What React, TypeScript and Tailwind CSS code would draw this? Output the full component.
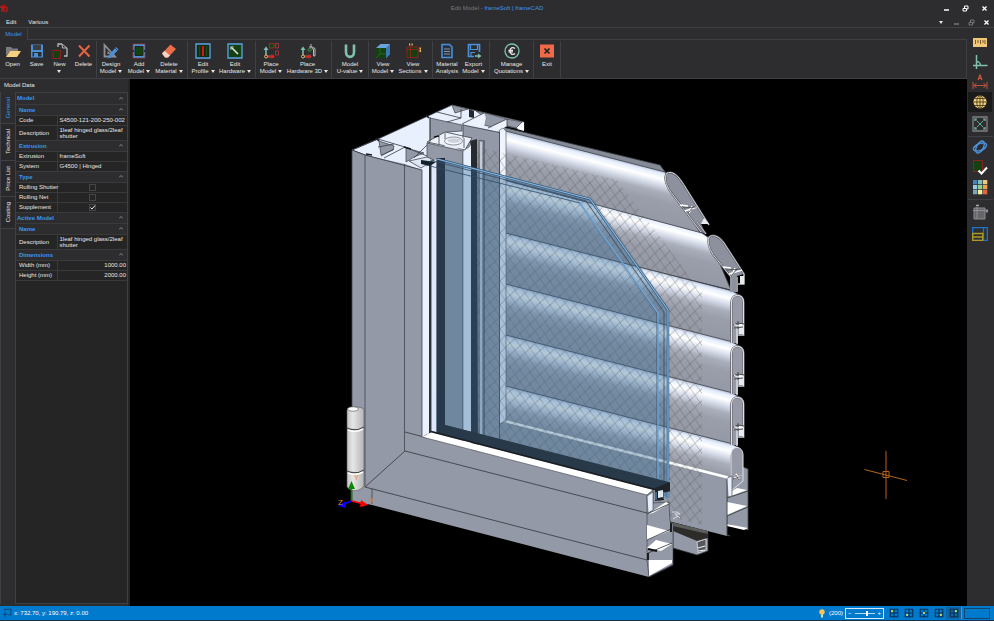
import { useState, type ReactNode } from "react";
import clsx from "clsx";

const BLUE = "#4b8fd6";
const TEAL = "#7fc0ae";
const GREEN = "#15400f";
const RED = "#e0201c";

const Icon = ({ children, size = "size-4" }: { children: ReactNode; size?: string }) => (
    <svg viewBox="0 0 16 16" className={clsx(size, "shrink-0")} fill="none" aria-hidden="true">
        {children}
    </svg>
);

const Axes = () => (
    <>
        <path d="M3 12V5M3 13.500h8" stroke={TEAL} strokeWidth="1.500" />
        <path d="M0.500 7L3 3.500L5.500 7z" fill={TEAL} />
        <path d="M5 13.500h5" stroke={RED} strokeWidth="1.500" />
        <path d="M8.500 11l3.500 2.500L8.500 16z" fill={RED} />
        <circle cx="3" cy="13.500" r="1.500" fill="#2d2d30" stroke="#f0b070" />
    </>
);

const ribbonIcons: Record<string, ReactNode> = {
    open: (
        <>
            <path d="M1 13V4h5l1.500 1.500H13V8H5z" fill="#7d7d7d" />
            <path d="M1 14l4-6h11l-4 6z" fill="#f5cf80" />
        </>
    ),
    save: (
        <>
            <path d="M2 1.500h12v13H2z" fill={BLUE} />
            <path d="M4 2h8v5H4z" fill="#3a3d42" />
            <path d="M3.500 9h9v4.500h-9z" fill="#2d2d30" />
            <path d="M5 10h4v4H5z" fill={BLUE} />
        </>
    ),
    new: (
        <>
            <path d="M6 4V1h4M15 5v8h-3" stroke="#b8b8b8" strokeWidth="1.300" />
            <path d="M10 1l5 4h-4.500z" stroke="#b8b8b8" />
            <path d="M1 7.500h7.500v8H1z" fill={GREEN} stroke="#8e2020" />
        </>
    ),
    delete: <path d="M3 2.500l10.500 11M13.500 2.500L3 13.500" stroke="#e8633f" strokeWidth="2" />,
    design: (
        <>
            <path d="M1.500 2v11.500H12z" stroke="#8c8f94" strokeWidth="1.800" />
            <path d="M4.500 8v3H8z" fill="#8c8f94" />
            <path d="M5 15.500l1-3.500 7-8 2.500 2.500-7.500 8z" fill={BLUE} />
            <path d="M12 5l2.500 2.500" stroke="#2d2d30" strokeWidth=".7" />
        </>
    ),
    add: (
        <>
            <path d="M2 1h12v14H2z" fill="#4b8fd6" stroke="#a33" strokeWidth=".7" />
            <path d="M4 3.500h8v9H4z" fill={GREEN} stroke="#222" />
            <path d="M1 8h2M13 8h2" stroke="#2d2d30" strokeWidth="2" />
        </>
    ),
    erase: (
        <>
            <path d="M1 10.500L9.500 1.500 15 6 7 14.500H4z" fill="#ec6b48" />
            <path d="M1 10.500l2.500-2.700 5.500 4.600-2 2.100H4z" fill="#f6d3c6" />
        </>
    ),
    profile: (
        <>
            <path d="M1 1h14v14H1z" fill="#14280f" stroke="#5aa4e8" strokeWidth="1.300" />
            <path d="M7 3h2v10H7z" fill="#d01818" />
            <path d="M4.500 3v10M11.500 3v10" stroke="#1c4a1a" strokeWidth="1.500" />
        </>
    ),
    hardware: (
        <>
            <path d="M1 1h14v14H1z" fill={GREEN} stroke="#5aa4e8" strokeWidth="1.300" />
            <path d="M5 5l6 6" stroke="#e4e4e4" strokeWidth="1.600" />
            <path d="M4 6.500V4h2.500" stroke="#e4e4e4" strokeWidth="1.200" />
        </>
    ),
    placeModel: (
        <>
            <Axes />
            <path d="M6.500.5H11V5H6.500z" fill={GREEN} stroke="#b02424" strokeWidth=".9" />
            <path d="M12.500.5h3V5h-3zM12.500 8h3v4h-3z" fill={GREEN} stroke="#b0304a" strokeWidth=".9" />
        </>
    ),
    placeHardware: (
        <>
            <Axes />
            <path d="M9 4h3l3 1.500V13h-1.500V6L12 5.500M11 1v4" stroke="#b8b8b8" />
            <path d="M8 6l3-1v3H8z" stroke="#3f8f4a" strokeWidth=".8" />
        </>
    ),
    uvalue: <path d="M4 1.500V9c0 6.500 8 6.500 8 0V1.500" stroke={TEAL} strokeWidth="2.600" />,
    view: (
        <>
            <path d="M1 5l4.500-4H15v10l-4 4H1z" fill="#6ba4dc" />
            <path d="M11 5l4-4v10l-4 4z" fill="#3b76bb" />
            <path d="M1 5h10v10H1z" fill={GREEN} />
            <path d="M1 15l4-4h6M5 11V5" stroke="#2f6a28" strokeWidth=".8" />
        </>
    ),
    sections: (
        <>
            <path d="M2 4h11v10.500H2z" fill={GREEN} stroke="#a02020" strokeWidth=".8" />
            <path d="M5.500 3v12M1 6.500h13" stroke="#a02020" strokeWidth=".8" />
            <path d="M4 1.500h1.200M6.500 1.500h1.200M14.500 5.500h1.500M14.500 8h1.500" stroke="#f2c14d" strokeWidth="1.800" />
        </>
    ),
    analysis: (
        <>
            <path d="M3 1.500h7.500L13 4v10.500H3z" fill="#26313f" stroke="#4b8fd6" strokeWidth="1.600" />
            <path d="M5 6h6M5 8.500h6M5 11h6" stroke="#9aa0a8" strokeWidth=".9" />
        </>
    ),
    export: (
        <>
            <path d="M8 13.500H2.500V1.500h11V9" stroke={BLUE} strokeWidth="1.700" />
            <path d="M4.500 2v4.500h7V2M5 13V9.500h4" stroke={BLUE} strokeWidth="1.200" />
            <path d="M9 13h4" stroke={TEAL} strokeWidth="1.500" />
            <path d="M12 10.500l3.500 2.500L12 15.500z" fill={TEAL} />
        </>
    ),
    euro: (
        <>
            <circle cx="8" cy="8" r="7" stroke={TEAL} strokeWidth="1.300" />
            <path d="M11 5.500c-2.500-2-5-.5-5 2.500s2.500 4.500 5 2.500M4.500 7.300h4.500M4.500 8.900h4.500" stroke="#e8e8e8" strokeWidth="1.300" />
        </>
    ),
    exit: (
        <>
            <path d="M1 1.500h14v13H1z" fill="#ee6a48" />
            <path d="M5.500 5.500l5 5M10.500 5.500l-5 5" stroke="#222" strokeWidth="1.700" />
        </>
    ),
};

type RibbonItem = { icon: string; lines: string[]; width: string; menu?: boolean };

const ribbonGroups: { width: string; items: RibbonItem[] }[] = [
    {
        width: "w-[97px]",
        items: [
            { icon: "open", lines: ["Open"], width: "w-[25px]" },
            { icon: "save", lines: ["Save"], width: "w-[23px]" },
            { icon: "new", lines: ["New", ""], width: "w-[23px]", menu: true },
            { icon: "delete", lines: ["Delete"], width: "w-[25px]" },
        ],
    },
    {
        width: "w-[91px]",
        items: [
            { icon: "design", lines: ["Design", "Model"], width: "w-[28px]", menu: true },
            { icon: "add", lines: ["Add", "Model"], width: "w-[28px]", menu: true },
            { icon: "erase", lines: ["Delete", "Material"], width: "w-[32px]", menu: true },
        ],
    },
    {
        width: "w-[68px]",
        items: [
            { icon: "profile", lines: ["Edit", "Profile"], width: "w-[30px]", menu: true },
            { icon: "hardware", lines: ["Edit", "Hardware"], width: "w-[34px]", menu: true },
        ],
    },
    {
        width: "w-[76px]",
        items: [
            { icon: "placeModel", lines: ["Place", "Model"], width: "w-[30px]", menu: true },
            { icon: "placeHardware", lines: ["Place", "Hardware 3D"], width: "w-[43px]", menu: true },
        ],
    },
    { width: "w-[37px]", items: [{ icon: "uvalue", lines: ["Model", "U-value"], width: "w-[36px]", menu: true }] },
    {
        width: "w-[64px]",
        items: [
            { icon: "view", lines: ["View", "Model"], width: "w-[28px]", menu: true },
            { icon: "sections", lines: ["View", "Sections"], width: "w-[32px]", menu: true },
        ],
    },
    {
        width: "w-[57px]",
        items: [
            { icon: "analysis", lines: ["Material", "Analysis"], width: "w-[28px]" },
            { icon: "export", lines: ["Export", "Model"], width: "w-[25px]", menu: true },
        ],
    },
    { width: "w-[44px]", items: [{ icon: "euro", lines: ["Manage", "Quotations"], width: "w-[43px]", menu: true }] },
    { width: "w-[27px]", items: [{ icon: "exit", lines: ["Exit"], width: "w-[26px]" }] },
];

const Caret = ({ className = "" }: { className?: string }) => (
    <svg viewBox="0 0 4 3" className={clsx("inline-block h-[3px] w-1", className)} aria-hidden="true">
        <path d="M0 0h4L2 3z" fill="currentColor" />
    </svg>
);

function RibbonButton({ icon, lines, width, menu }: RibbonItem) {
    return (
        <button className={clsx("flex flex-col items-center gap-0.5 pt-0.5 hover:bg-[#3e3e42]", width)}>
            <Icon>{ribbonIcons[icon]}</Icon>
            <span className="flex flex-col items-center whitespace-nowrap leading-[7px]">
                {lines.map((line, i) => (
                    <span key={line} className="flex h-[7px] items-center gap-0.5">
                        {line}
                        {menu && i === lines.length - 1 && <Caret />}
                    </span>
                ))}
            </span>
        </button>
    );
}

function WindowButtons({ dim = false }: { dim?: boolean }) {
    const tone = dim ? "text-[#77777a]" : "text-white";
    return (
        <div className={clsx("flex items-center", dim ? "gap-2 pr-1" : "gap-3 pr-1.5")}>
            {dim && (
                <button aria-label="Window menu" className="mr-0.5 flex">
                    <Caret />
                </button>
            )}
            <button aria-label="Minimize" className={tone}>
                <svg viewBox="0 0 7 7" className="size-[7px]"><path d="M1 5h5" stroke="currentColor" strokeWidth="1.500" /></svg>
            </button>
            <button aria-label="Restore" className={tone}>
                <svg viewBox="0 0 7 7" className="size-[7px]" fill="none" stroke="currentColor">
                    <path d="M1 3.500h3.500V6H1zM2.500 3V1h3.500v3H5" />
                </svg>
            </button>
            <button aria-label="Close" className="text-white">
                <svg viewBox="0 0 7 7" className="size-[7px]"><path d="M1.500 1.500l4 4M5.500 1.500l-4 4" stroke="currentColor" strokeWidth="1.300" /></svg>
            </button>
        </div>
    );
}

type Row =
    | { kind: "group" | "head"; label: string }
    | { kind: "text"; label: string; value: string; tall?: boolean; right?: boolean }
    | { kind: "check"; label: string; checked: boolean };

const rows: Row[] = [
    { kind: "group", label: "Model" },
    { kind: "head", label: "Name" },
    { kind: "text", label: "Code", value: "S4500-121-200-250-002" },
    { kind: "text", label: "Description", value: "1leaf hinged glass/2leaf shutter", tall: true },
    { kind: "head", label: "Extrusion" },
    { kind: "text", label: "Extrusion", value: "frameSoft" },
    { kind: "text", label: "System", value: "G4500 | Hinged" },
    { kind: "head", label: "Type" },
    { kind: "check", label: "Rolling Shutter", checked: false },
    { kind: "check", label: "Rolling Net", checked: false },
    { kind: "check", label: "Supplement", checked: true },
    { kind: "group", label: "Active Model" },
    { kind: "head", label: "Name" },
    { kind: "text", label: "Description", value: "1leaf hinged glass/2leaf shutter", tall: true },
    { kind: "head", label: "Dimensions" },
    { kind: "text", label: "Width (mm)", value: "1000.00", right: true },
    { kind: "text", label: "Height (mm)", value: "2000.00", right: true },
];

function PropertyRow({ row }: { row: Row }) {
    const [checked, setChecked] = useState(row.kind === "check" && row.checked);

    if (row.kind === "group" || row.kind === "head") {
        return (
            <tr className="h-[11px] border-b border-[#3a3a3d] bg-[#2d2d30]">
                <th colSpan={2} className={clsx("p-0 pr-1 text-left font-bold text-[#3c96ee]", row.kind === "head" ? "pl-[3px]" : "pl-px")}>
                    <span className="flex items-center justify-between">
                        {row.label}
                        <svg viewBox="0 0 4 3" className="h-[3px] w-1" fill="none"><path d="M0 2.500L2 .5l2 2" stroke="#8a8a8d" /></svg>
                    </span>
                </th>
            </tr>
        );
    }

    const id = row.label.replace(/\s/g, "-").toLowerCase();
    return (
        <tr className={clsx("border-b border-[#3a3a3d]", row.kind === "text" && row.tall ? "h-[15px]" : "h-[10px]")}>
            <th className="w-[41px] border-r border-[#3a3a3d] p-0 pl-[3px] text-left font-normal whitespace-nowrap">
                {row.kind === "check" ? <label htmlFor={id}>{row.label}</label> : row.label}
            </th>
            <td className={clsx("p-0 pr-px pl-0.5", row.kind === "text" && row.right && "text-right")}>
                {row.kind === "check" ? (
                    <span className="relative mx-auto flex size-[7px]">
                        <input
                            id={id}
                            type="checkbox"
                            checked={checked}
                            onChange={(e) => setChecked(e.target.checked)}
                            className="size-[7px] appearance-none border border-[#454548]"
                        />
                        {checked && (
                            <svg viewBox="0 0 7 7" className="pointer-events-none absolute inset-0" fill="none">
                                <path d="M1.500 3.500L3 5l3-3.500" stroke="#eee" />
                            </svg>
                        )}
                    </span>
                ) : (
                    row.value
                )}
            </td>
        </tr>
    );
}

const sideTabs = [
    { label: "General", height: "h-8" },
    { label: "Technical", height: "h-[37px]" },
    { label: "Price List", height: "h-[36px]" },
    { label: "Costing", height: "h-8" },
];

function ModelData() {
    const [tab, setTab] = useState("General");
    return (
        <aside className="flex w-[130px] shrink-0 flex-col border-r-2 border-[#252528] pb-0.5">
            <h2 className="flex h-[13px] items-center pl-1">Model Data</h2>
            <div className="flex min-h-0 flex-1">
                <div role="tablist" aria-orientation="vertical" className="flex w-[15px] shrink-0 flex-col border-l border-[#3f3f46]">
                    {sideTabs.map(({ label, height }) => (
                        <button
                            key={label}
                            role="tab"
                            aria-selected={tab === label}
                            onClick={() => setTab(label)}
                            className={clsx(
                                "flex w-full items-center justify-center border-b border-[#3f3f46]",
                                height,
                                tab === label ? "text-[#3c96ee]" : "bg-[#29292b]",
                            )}
                        >
                            <span className="rotate-180 whitespace-nowrap [writing-mode:vertical-rl]">{label}</span>
                        </button>
                    ))}
                </div>
                <div className="flex-1 border border-[#3f3f46] bg-[#252526]">
                    <table className="w-full table-fixed border-collapse leading-[6px]">
                        <colgroup>
                            <col className="w-[41px]" />
                            <col />
                        </colgroup>
                        <tbody>
                            {rows.map((row, i) => <PropertyRow key={i} row={row} />)}
                        </tbody>
                    </table>
                </div>
            </div>
        </aside>
    );
}

// slat cross section, drawn at the right hand end of each straight slat
const SlatEnd = () => (
    <g>
        <path d="M731 343V302c0-10 13-10 13 0v34h-6v7z" fill="#989ba7" />
        <path d="M731.500 343V302c0-9 12-9 12 0v33h-5" fill="none" stroke="#55585f" strokeWidth="2.200" />
        <path d="M731.500 343V302c0-9 12-9 12 0v33h-5" fill="none" stroke="#dfe1e6" strokeWidth="1.200" />
        <path d="M737 327v17" stroke="#d8dae0" strokeWidth="1.500" />
        <path d="M739 324h5v10h-5z" fill="#e9ebf0" />
        <path d="M733 325l5-2 6 1M734 328l9-1M738 321v8" stroke="#4b4b4f" strokeWidth="1" fill="none" />
        <path d="M734 324l3 2 5-1" stroke="#fff" strokeWidth="1" fill="none" />
    </g>
);

function FrameModel() {
    const glass = "M437 159L590 199L668 310V498L655 490L436 433z";
    return (
        <svg viewBox="130 79 837 527" className="block h-full w-full" role="img" aria-label="3D frame section">
            <defs>
                <linearGradient id="slat" gradientUnits="userSpaceOnUse" x1="506" y1="233" x2="493.500" y2="282">
                    <stop offset="0" stopColor="#b4bfd8" />
                    <stop offset=".06" stopColor="#e6eefc" />
                    <stop offset=".16" stopColor="#fff" />
                    <stop offset=".28" stopColor="#d6dcea" />
                    <stop offset=".42" stopColor="#aaaebb" />
                    <stop offset=".6" stopColor="#9a9daa" />
                    <stop offset="1" stopColor="#9599a5" />
                </linearGradient>
                <linearGradient id="hinge">
                    <stop offset="0" stopColor="#c4c4c4" />
                    <stop offset=".35" stopColor="#e6e6e6" />
                    <stop offset="1" stopColor="#b4b4b4" />
                </linearGradient>
                <pattern id="net" width="10" height="12" patternUnits="userSpaceOnUse" patternTransform="skewY(14)">
                    <path d="M0 0L10 12M10 0L0 12" stroke="#55564f" strokeWidth=".7" fill="none" />
                </pattern>
            </defs>

            {/* roller shutter */}
            <g stroke="#3c3f46" strokeWidth=".8">
                <path d="M498 126L660 165L666 173L500 134z" fill="#858a97" />
                <g transform="translate(0 -102)">
                    <path d="M500 231.500L665 274L699 333L700 335L500 282z" fill="url(#slat)" />
                </g>
                <g transform="translate(0 -53)">
                    <path d="M500 232L702 286L709 291L731 343L500 286z" fill="url(#slat)" />
                </g>
                {[0, 51, 102, 153].map((dy) => (
                    <g key={dy} transform={`translate(0 ${dy})`}>
                        <path d="M500 231.500L731 290.500L738 294L731 302V343L500 284z" fill="url(#slat)" />
                    </g>
                ))}
            </g>
            <path d="M666 173c-4 6 1 16 7 22L701 232l5 2-5-10h8L687 190c-6-10-10-16-16-18z" fill="#8d919d" />
            <path d="M706 234L697 222M709 225L687 190c-6-10-12-20-20-17-4 5 0 15 6 22L701 232" fill="none" stroke="#55585f" strokeWidth="2" />
            <path d="M706 234L697 222M709 225L687 190c-6-10-12-20-20-17-4 5 0 15 6 22L701 232" fill="none" stroke="#d3d5da" />
            <path d="M701 224h8l-5-6z" fill="#e8eaf0" />
            <path d="M680 205l8 1M685 211l12-4M692 206l-3 7" stroke="#fff" strokeWidth="1.600" />
            <path d="M682 208l15-1M688 213l6-7" stroke="#444" strokeWidth=".8" />
            <path d="M709 237c-2 6 1 14 6 20L731 277v15h6V276l7-2L724 243c-5-7-11-9-15-6z" fill="#8d919d" />
            <path d="M738 284h6V274L724 243c-5-7-11-9-15-6-2 6 1 14 6 20L731 277v15M737 277v15" fill="none" stroke="#55585f" strokeWidth="2" />
            <path d="M738 284h6V274L724 243c-5-7-11-9-15-6-2 6 1 14 6 20L731 277v15M737 277v15" fill="none" stroke="#d3d5da" />
            <path d="M740 276h4v8h-4z" fill="#e8eaf0" />
            <path d="M723 267l8 1M729 274l13-4M735 268l-3 7" stroke="#fff" strokeWidth="1.600" />
            <path d="M726 270l15-1M732 275l5-6" stroke="#444" strokeWidth=".8" />
            {[0, 51, 102].map((dy) => (
                <g key={dy} transform={`translate(0 ${dy})`}><SlatEnd /></g>
            ))}

            {/* bottom shutter rail */}
            <path d="M738 468L743 467L748 469V530L727 524V480z" fill="#9399a6" stroke="#43464d" strokeWidth=".8" />
            <path d="M731 478V455c0-10 12-10 12 0v26l-12 10z" fill="#989ba7" stroke="#dfe1e6" />
            <path d="M734 478l8-2M736 474l3 5" stroke="#fff" strokeWidth="1.600" />
            <path d="M733 479l9-3M736 475l3 5" stroke="#444" strokeWidth=".7" />
            <path d="M727 494L737 488L747 490L731 496zM727 502L747 506L727 515zM727 524L748 528L744 530L727 526z" fill="#fff" />
            <path d="M727 498L748 491M727 516L748 507" stroke="#33353a" strokeWidth=".8" />
            <path d="M500 420L727 479V536L500 478z" fill="#9399a6" />
            <path d="M727 477V535L730 536" stroke="#4a4d54" fill="none" />
            <path d="M727 478L732 476V496L728 497z" fill="#e8effd" stroke="#55585f" strokeWidth=".7" />
            <path d="M503 419L729 476L727 479L502 422z" fill="#fff" stroke="#777c88" strokeWidth=".5" />

            {/* guide stile */}
            <path d="M463 124L500 132V478L463 468z" fill="#9399a6" />

            {/* top cross sections */}
            <path d="M352 150L378 139L428 116L452 105L524 122V130L506 126L500 132L484 134L463 160L421 171L365 155z" fill="#e8effd" stroke="#45484f" strokeWidth=".8" />
            <path d="M463 125L484 129L502 133V170H463z" fill="#9399a6" />
            <g fill="#9399a6" stroke="#3c3f46" strokeWidth=".7">
                <path d="M452 105L468 109L455 113z" />
                <path d="M430 118L462 125V131L447 132L435 138L430 142z" />
                <path d="M476 111L485 113L507 119L522 122L516 128L500 124L492 127L484 125L486 118z" />
                <path d="M379 141L394 146L393 150L381 155z" />
                <path d="M406 148L424 153L414 157L406 162z" />
            </g>
            <path d="M427 142L445 132L472 138L465 150z" fill="#edf2fd" stroke="#3c3f46" strokeWidth=".8" />
            <path d="M439 136v8M445 133v6M464 138v10" stroke="#62666e" fill="none" />
            <path d="M444.500 141v5c2 4 16 4 18 0v-5" fill="#e9edf5" />
            <ellipse cx="453.500" cy="141" rx="9" ry="4" fill="#f4f7fc" stroke="#8d9096" />
            <ellipse cx="454" cy="140.500" rx="6.500" ry="2.300" fill="#cdd2dc" />
            <path d="M465 123L484 113L486 118L484 127z" fill="#edf2fd" />
            <path d="M490 127L507 119V126L500 130z" fill="#edf2fd" />
            <path d="M517 129L524 122V131z" fill="#fff" />
            <path d="M462 124L484 113M488 128L507 119M507 119V126M378 147L394 144M381 156L394 149M384 158L405 147M405 147L427 156M414 158L430 142M463 124V138M430 117V142M352 150L378 139M378 139L405 147M437 112L461 118M461 109V118L447 122M463 125L502 133" stroke="#393c42" strokeWidth=".8" fill="none" />
            <path d="M469 109l5 2v7l-5-1z" fill="#24272b" />
            <path d="M376 138l3 3M426 115l3 3M434 137l5-1M404 147l7 2M366 154l6 1" stroke="#16181b" strokeWidth="1.600" />
            <path d="M499.500 130L503 128L506 131V421L499.500 424z" fill="#f0f4ff" stroke="#4a4d54" strokeWidth="0.6" />

            {/* insect net */}
            <path d="M474 146L617 180L702 293V525L474 468z" fill="url(#net)" opacity=".6" />
            <path d="M484 140V440M499.500 132V445" stroke="#3f444c" strokeWidth=".8" />
            <path d="M671 522L708 531V536L673 528z" fill="#5d5e5c" />
            <path d="M673 528L697 535L708 533V551L697 555L673 548z" fill="#9399a6" stroke="#303236" strokeWidth=".7" />
            <path d="M673 526L708 534V538L697 541L673 531z" fill="#2d2c2b" />
            <path d="M697 542L706 539V550L698 553z" fill="#55575c" stroke="#c8cad0" />
            <path d="M698 548l7-2M698 551l7-1" stroke="#f0f0f2" strokeWidth="1.200" />
            <path d="M672 512h5l3 2h-5l5 4M673 519l5-3" stroke="#d8dade" strokeWidth="1" fill="none" />

            {/* sash stile */}
            <path d="M427 143L463 151V470L427 460z" fill="#9399a6" stroke="#3c3f46" strokeWidth=".7" />
            <path d="M463 151L469 147L472 143V468L463 465z" fill="#e8effd" stroke="#50545c" strokeWidth=".6" />
            <path d="M470 141L477 139L478 470H471V146z" fill="#26292e" />
            <path d="M479 140L484 141V470M479 140V470" stroke="#50555e" strokeWidth=".8" fill="none" />
            <path d="M480 142h2v300h-2z" fill="#c2cbdc" />

            {/* outer frame */}
            <path d="M352 150L365 155L405 164L422 170V437L647 495V513L649 577L372 505L352 501z" fill="#9399a6" />
            <path d="M422 169L431 164V432L422 437z" fill="#eaf1ff" />
            <path d="M432 163L437 158V432L432 431z" fill="#dfe9fb" />
            <path d="M430 164V433" stroke="#1b1d20" strokeWidth="1.800" />
            <path d="M409 161L427 157L434 160L421 168z" fill="#dfe7f5" stroke="#33363b" strokeWidth=".7" />
            <path d="M421 160L436 162L430 166L421 164z" fill="#14202c" />
            <path d="M436.500 158H445V425L668 483L670 490L655 488L436.500 432z" fill="#241e22" />
            <path d="M365 155V487M404.500 164V451M422 170V436M352 150V501M372 489V504" stroke="#41454d" strokeWidth=".8" />
            <path d="M352 150L365 155L422 170M365 487L405 451M365 487L647 560M405 451L647 513M405 432L422 436.500" stroke="#33363c" strokeWidth=".8" fill="none" />

            {/* glass */}
            <path d={glass} fill="#346996" fillOpacity=".37" />
            <path d="M437 159L590 199L668 310V498" fill="none" stroke="#32506e" strokeWidth="2.400" />
            <path d="M437 159L590 199L668 310V498" fill="none" stroke="#84b8e4" strokeWidth="1.200" />
            <path d="M430 160L586 201L664 312V496M430 166L580 203L657 313V492" fill="none" stroke="#2f4b67" strokeWidth=".8" />
            <path d="M580 203L658 313V492" fill="none" stroke="#6fa7d8" strokeWidth="1.300" />

            {/* sill and front rail */}
            <path d="M445 425L669 482V491L663 492L436 433z" fill="#28394a" />
            <path d="M422 437L431 432.500L653 490L647 495z" fill="#fff" />
            <path d="M431 431.500L655 489.500" stroke="#1c1d1f" strokeWidth="1.500" />
            <path d="M422 437L647 495" stroke="#50545c" strokeWidth=".7" />
            <path d="M655 488L670 482V491L664 493V500L655 501z" fill="#1e2329" />
            <path d="M658 491L663 490V497L658 498z" fill="#dfe6f0" />
            <path d="M656 492V500M664 492V499" stroke="#6fa7d8" />

            {/* front rail cross section */}
            <path d="M647 495L653 490V503L669 502L670 522L673 524V565L649 577L647 560z" fill="#9399a6" stroke="#43464d" strokeWidth=".7" />
            <path d="M647 496L653 492V510L648 513z" fill="#e8effd" stroke="#50545c" strokeWidth=".7" />
            <path d="M648 514L666 502L669 504L653 513zM647 525L669 531L647 540zM647 548L656 540L672 544L661 551zM649 560L672 560V563L649 576z" fill="#fff" />
            <path d="M647 540L671 529M648 553L672 543M649 577L673 565M647 514L669 504" stroke="#2f3237" strokeWidth=".8" />
            <path d="M648 549L657 551M648 553V560M671 523V532" stroke="#111" strokeWidth="1.800" />

            {/* hinge */}
            <path d="M347 410c0-4 17-4 17 0V486c-4 6-13 6-17 1z" fill="url(#hinge)" stroke="#55585d" strokeWidth=".6" />
            <ellipse cx="353" cy="409" rx="5.500" ry="2.200" fill="#fafafa" stroke="#555" strokeWidth=".6" />
            <path d="M347 428q9 4 17-1M347 471q9 4 17-1" stroke="#4c4c4c" strokeWidth="1.300" fill="none" />
            <path d="M348 430q8 3 15-1M348 473q8 3 15-1" stroke="#fff" strokeWidth="1.500" fill="none" />

            {/* origin triad */}
            <path d="M351.500 501V488" stroke="#0a8a0a" strokeWidth="1.500" />
            <path d="M348 489L351.500 481L355 489z" fill="#0a8a0a" />
            <path d="M351.500 501L362 503.500" stroke="#f00" strokeWidth="1.500" />
            <path d="M361 500L368 505L360 507z" fill="#f00" />
            <path d="M351.500 501L344 504" stroke="#00f" strokeWidth="1.500" />
            <path d="M346 501L338 506L346 508z" fill="#00f" />
            <g fill="#f08428" fontSize="7">
                <text x="354" y="480">Y</text>
                <text x="369" y="503">X</text>
                <text x="338" y="505" fontSize="8">Z</text>
            </g>

            {/* cursor */}
            <path d="M886 451V499M864.500 469.500L907 480.500M883 471.500h6v6h-6z" stroke="#b5651a" strokeWidth="1" fill="none" />
        </svg>
    );
}

const palette = ["#4b7fc4", "#7fc0ae", "#f2c878", "#9cc8e8", "#8fd08a", "#f0a050", "#7aa8b8", "#f6ec9a", "#e86040"];

const tools: { label: string; height: string; active?: boolean; divider?: boolean; icon: ReactNode }[] = [
    {
        label: "Measure",
        height: "h-5",
        icon: (
            <>
                <path d="M1 4h14v9H1z" fill="#f2c878" />
                <path d="M3.500 6v4M6 6v3M8.500 6v4M11 6v3M13 6v4" stroke="#6b4f20" strokeWidth=".9" />
            </>
        ),
    },
    { label: "Ortho", height: "h-5", icon: <path d="M4.500 1v14M1 11.500h14.500M4.500 7.500a4 4 0 014 4" stroke={TEAL} strokeWidth="1.500" /> },
    {
        label: "Dimension",
        height: "h-5",
        icon: (
            <>
                <path d="M6 6l2-5 2 5M6.800 4.500h2.400" stroke="#d4573c" strokeWidth="1.200" />
                <path d="M1 8v7M15 8v7M2 11.500h12M4.500 9L2 11.500 4.500 14M11.500 9l2.500 2.500-2.500 2.500" stroke="#c4533c" />
            </>
        ),
    },
    {
        label: "World view",
        height: "h-5",
        active: true,
        icon: (
            <>
                <circle cx="8" cy="8" r="6.500" fill="#f2d07c" />
                <path d="M8 1.500v13M1.500 8h13M3 4.500h10M3 11.500h10" stroke="#4a3c1c" strokeWidth=".9" />
                <ellipse cx="8" cy="8" rx="3.200" ry="6.500" stroke="#4a3c1c" strokeWidth=".9" />
            </>
        ),
    },
    {
        label: "Zoom extents",
        height: "h-6",
        divider: true,
        icon: (
            <>
                <path d="M1 1h14v14H1z" stroke="#808084" strokeWidth="1.300" />
                <path d="M4.500 4.500l7 7M11.500 4.500l-7 7" stroke="#5fa890" />
                <path d="M3 5V3h2M11 3h2v2M13 11v2h-2M5 13H3v-2" stroke={TEAL} strokeWidth="1.200" />
            </>
        ),
    },
    {
        label: "Orbit",
        height: "h-5",
        icon: (
            <g stroke={BLUE} strokeWidth="1.500">
                <ellipse cx="8" cy="8" rx="7" ry="3.400" transform="rotate(-22 8 8)" />
                <ellipse cx="8" cy="8" rx="6.500" ry="3.400" transform="rotate(-62 8 8)" />
                <path d="M3 8l3-3M9 12l4-3" />
            </g>
        ),
    },
    {
        label: "Validate",
        height: "h-5",
        icon: (
            <>
                <path d="M1.500 1.500h9v11h-9z" fill={GREEN} stroke="#8e2020" />
                <path d="M6.500 11.500l3 3L15 8.500" stroke="#fff" strokeWidth="2" />
            </>
        ),
    },
    {
        label: "Colours",
        height: "h-5",
        divider: true,
        icon: palette.map((fill, i) => <rect key={fill} x={1 + (i % 3) * 5} y={1 + Math.floor(i / 3) * 5} width="4.300" height="4.300" fill={fill} />),
    },
    {
        label: "Section box",
        height: "h-6",
        icon: (
            <>
                <path d="M2 4h11v11H2z" fill="#66666a" stroke="#8c8c90" />
                <path d="M5 3v12M1 6.500h13" stroke="#9a9a9e" strokeWidth=".8" />
                <path d="M4 1.500h3M15 5.500v3" stroke="#aaa" strokeWidth="1.600" />
            </>
        ),
    },
    {
        label: "Layout",
        height: "h-5",
        icon: (
            <>
                <path d="M.7 1.700h14.600v12.600H.7zM11.500 2v12" stroke="#1f74c8" strokeWidth="1.300" />
                <path d="M.7 7.500h10v6.800H.7zM.7 11h10" stroke="#b09a20" strokeWidth="1.300" />
            </>
        ),
    },
];

const viewports = [
    { x: 5, y: 5 },
    { x: 5, y: 11 },
    { x: 8, y: 8 },
    { x: 11, y: 11 },
    { x: 11, y: 5 },
];

function StatusBar() {
    const [light, setLight] = useState(66);
    return (
        <footer className="flex h-[15px] shrink-0 items-center justify-between border-b border-[#12304a] bg-[#007acc] pr-1 pl-0.5 text-white">
            <div className="flex items-center gap-0.5">
                <Icon size="size-[10px]">
                    <path d="M4 4V2h10v9h-4M1 10h8M5 6v9" stroke="#0d4f86" strokeWidth="2" />
                </Icon>
                <span>x: 732.70, y: 190.79, z: 0.00</span>
            </div>
            <div className="flex items-center">
                <svg viewBox="0 0 6 9" className="mr-1 h-[9px] w-1.5" aria-hidden="true">
                    <circle cx="3" cy="3" r="2.700" fill="#ffc554" />
                    <path d="M2 5.500h2v3H2z" fill="#e8dcc0" />
                </svg>
                <label htmlFor="light" className="mr-0.5">(200)</label>
                <div className="flex h-[11px] w-[39px] items-center justify-between border border-[#d4e8f8] px-0.5">
                    <button aria-label="Decrease" className="leading-none">−</button>
                    <input
                        id="light"
                        type="range"
                        value={light}
                        onChange={(e) => setLight(Number(e.target.value))}
                        className="h-px w-5 appearance-none bg-[#b8daf4] [&::-webkit-slider-thumb]:h-[5px] [&::-webkit-slider-thumb]:w-0.5 [&::-webkit-slider-thumb]:appearance-none [&::-webkit-slider-thumb]:bg-white"
                    />
                    <button aria-label="Increase" className="leading-none">+</button>
                </div>
                <div className="mr-0.5 ml-0.5 flex border-r border-[#3c9ade]">
                    {viewports.map(({ x, y }, i) => (
                        <button key={i} aria-label={`Viewport ${i + 1}`} className={clsx("flex h-3 w-[15px] items-center justify-center", i === 4 && "bg-[#1264a0]")}>
                            <Icon size="size-[10px]">
                                <path d="M2 2h12v12H2zM8 1v14M1 8h14" stroke="#0b3054" strokeWidth="1.800" />
                                <rect x={x - 1.5} y={y - 1.5} width="3" height="3" fill="#d8e860" />
                            </Icon>
                        </button>
                    ))}
                </div>
                <div className="h-[11px] w-[26px] border border-[#15456e]" />
            </div>
        </footer>
    );
}

export default function App() {
    return (
        <div className="flex h-screen flex-col overflow-hidden bg-[#2d2d30] font-['Liberation_Sans',Arial,sans-serif] text-[6px] leading-[7px] text-[#e6e6e6]">
            <header className="shrink-0 border-b border-[#3f3f46]">
                <div className="grid h-[17px] grid-cols-[1fr_auto_1fr] items-center">
                    <svg viewBox="0 0 9 10" className="h-[10px] w-[9px]" fill="none" stroke="#c01818" strokeWidth="1.300" aria-hidden="true">
                        <path d="M0 3.500l2-1.500v6M4 8V3M2 4.500l2-2 3 1v3L5.500 8M4 1h1" />
                    </svg>
                    <h1 className="text-[#3c96ee]"><span className="text-[#77777a]">Edit Model</span> - frameSoft | frameCAD</h1>
                    <div className="flex justify-end"><WindowButtons /></div>
                </div>
                <div className="flex h-[10px] items-center justify-between">
                    <nav className="flex gap-3 pl-1.5">
                        <button>Edit</button>
                        <button>Various</button>
                    </nav>
                    <WindowButtons dim />
                </div>
            </header>

            <div className="flex min-h-0 flex-1">
                <div className="flex min-w-0 flex-1 flex-col">
                    <div role="tablist" className="flex h-3 shrink-0">
                        <button role="tab" aria-selected="true" className="w-7 border-r border-[#3f3f46] text-[#3c96ee]">Model</button>
                        <div className="flex-1 border-b border-[#3f3f46]" />
                    </div>
                    <div className="flex h-[39px] shrink-0 border-r border-b border-[#3f3f46] pt-px">
                        {ribbonGroups.map(({ width, items }, i) => (
                            <div key={i} className={clsx("flex shrink-0 border-r border-[#3f3f46]", width)}>
                                {items.map((item) => <RibbonButton key={item.icon} {...item} />)}
                            </div>
                        ))}
                    </div>
                    <div className="flex min-h-0 flex-1">
                        <ModelData />
                        <main className="min-w-0 flex-1 bg-black">
                            <FrameModel />
                        </main>
                    </div>
                </div>

                <div role="toolbar" aria-label="View tools" className="flex w-[27px] shrink-0 flex-col px-px pt-1">
                    {tools.map(({ label, height, active, divider, icon }) => (
                        <div key={label} className={clsx(divider && "border-b border-[#3f3f46]", label === "Colours" && "pb-0.5")}>
                            <button
                                aria-label={label}
                                className={clsx("flex w-6 items-center justify-center", height, active && "bg-[#1b1b1c]")}
                            >
                                <Icon>{icon}</Icon>
                            </button>
                        </div>
                    ))}
                </div>
            </div>

            <StatusBar />
        </div>
    );
}
